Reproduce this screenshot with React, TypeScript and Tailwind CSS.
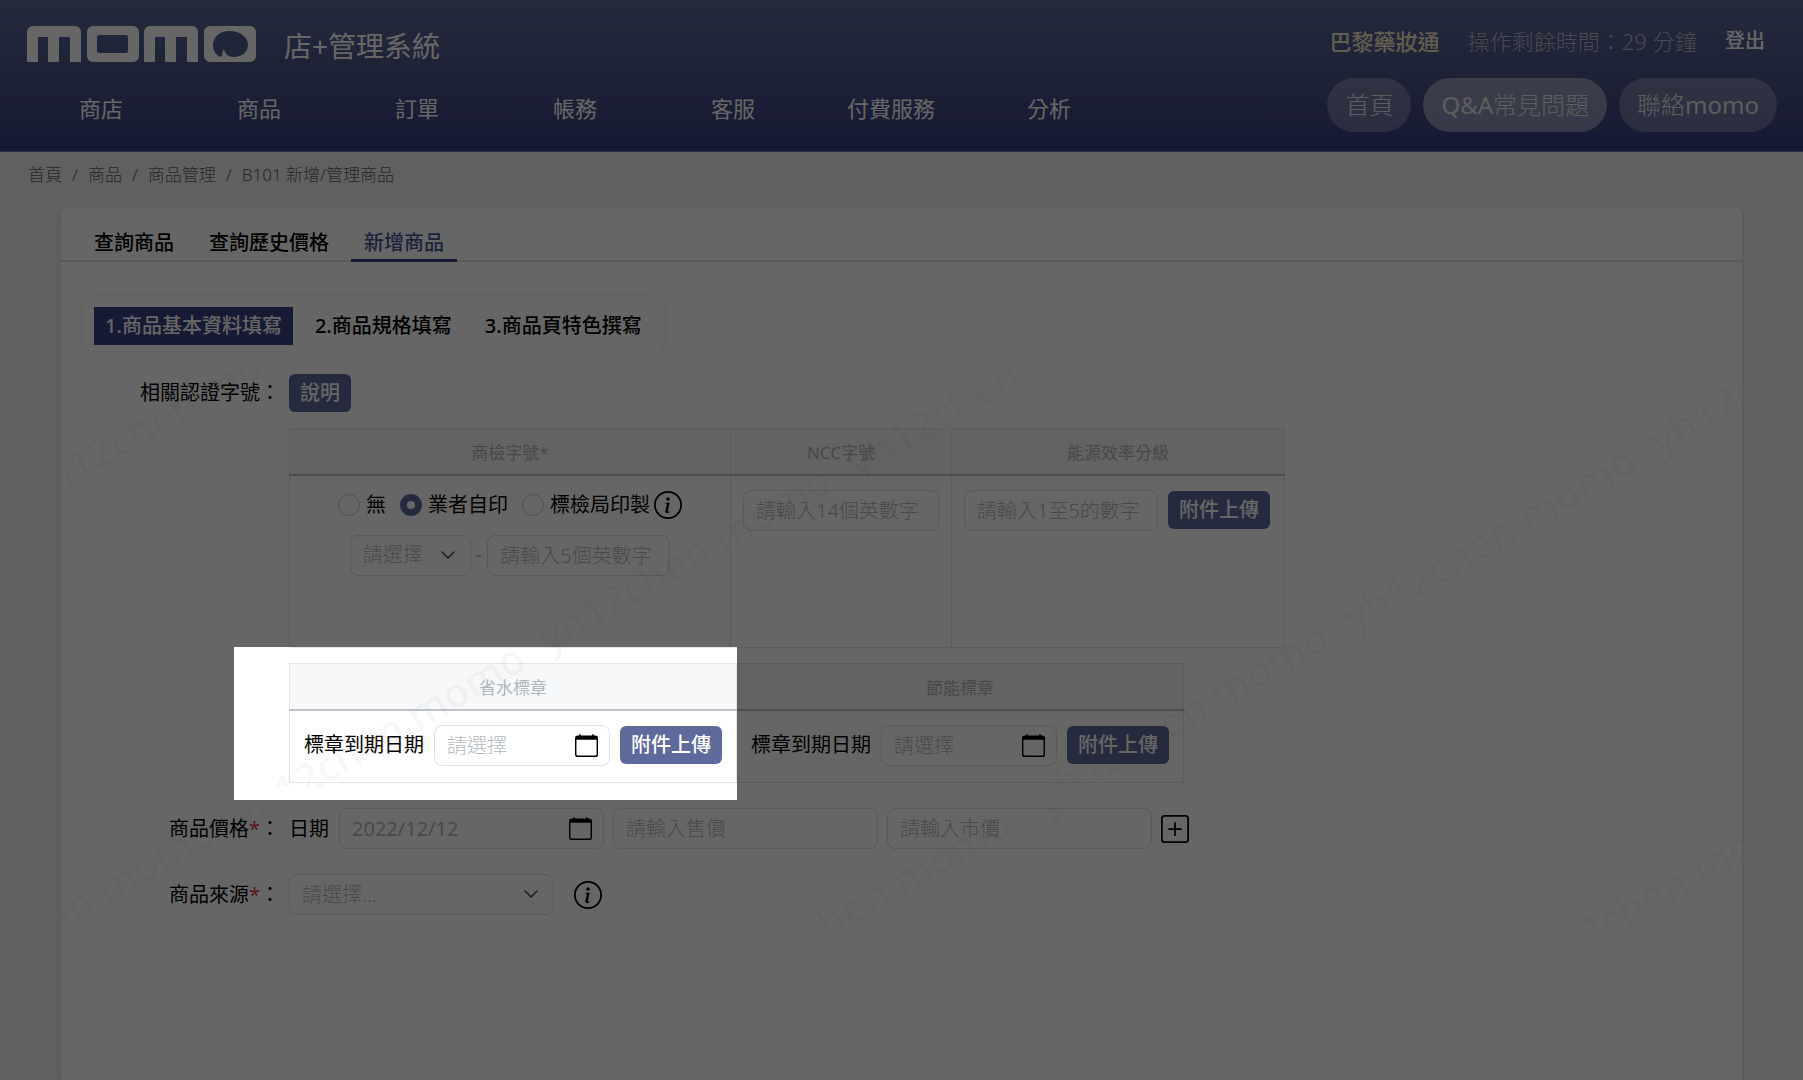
import { useState } from "react";

import {
  BsCalendar,
  BsChevronDown,
  BsInfoCircle,
  BsPlusSquare,
} from "react-icons/bs";

const navItems = ["商店", "商品", "訂單", "帳務", "客服", "付費服務", "分析"];
const breadcrumbs = ["首頁", "商品", "商品管理", "B101 新增/管理商品"];
const tabs = ["查詢商品", "查詢歷史價格", "新增商品"];
const steps = ["1.商品基本資料填寫", "2.商品規格填寫", "3.商品頁特色撰寫"];
const certOptions = ["無", "業者自印", "標檢局印製"];

const fieldClass =
  "h-[41px] rounded-lg border border-[#dcdfe2] bg-white px-3 text-xl text-[#b4babf] placeholder:text-[#b4babf] focus:outline-none";

function Logo() {
  return (
    <svg viewBox="0 0 229 36" className="h-9 w-[229px]" fill="#fff" role="img" aria-label="momo">
      <path d="M0 36V6a6 6 0 0 1 6-6h42a6 6 0 0 1 6 6v30H43V11H32v25H21V11H11v25z" />
      <path
        fillRule="evenodd"
        d="M66 0h40a6 6 0 0 1 6 6v24a6 6 0 0 1-6 6H66a6 6 0 0 1-6-6V6a6 6 0 0 1 6-6zm6 9a2 2 0 0 0-2 2v14a2 2 0 0 0 2 2h27a2 2 0 0 0 2-2V11a2 2 0 0 0-2-2z"
      />
      <path d="M117 36V6a6 6 0 0 1 6-6h42a6 6 0 0 1 6 6v30h-11V11h-11v25h-11V11h-10v25z" />
      <path
        fillRule="evenodd"
        d="M183 0h40a6 6 0 0 1 6 6v24a6 6 0 0 1-6 6h-40a6 6 0 0 1-6-6V6a6 6 0 0 1 6-6zm19 5c-9 0-16 6-16 14 0 5 2 9 7 12l2-1c0-2 0-4 2-7 1 5 4 8 10 8 8 0 14-5 14-12 0-8-8-14-19-14z"
      />
    </svg>
  );
}

function Header() {
  return (
    <header className="flex h-[152px] justify-between border-b border-[#6a70a0] bg-linear-to-b from-[#5c6898] via-[#4c5588] to-[#363e80] pr-[26px] text-white">
      <div>
        <div className="flex items-start gap-7 pt-[26px] pl-[27px]">
          <Logo />
          <h1 className="text-[28px] leading-10">店+管理系統</h1>
        </div>
        <nav className="mt-[26px] ml-[22px] grid grid-cols-[repeat(7,158px)] text-center text-[22px] leading-8">
          {navItems.map((item) => (
            <a key={item} href="#">
              {item}
            </a>
          ))}
        </nav>
      </div>

      <div className="pt-[25px]">
        <div className="flex items-center justify-between pr-3 pl-0.5 text-[22px] leading-8">
          <span className="font-medium text-[#f5e8c4]">巴黎藥妝通</span>
          <span className="font-light text-[#b4b9c6]">操作剩餘時間：29 分鐘</span>
          <a href="#" className="text-xl font-medium">
            登出
          </a>
        </div>
        <div className="mt-[21px] flex gap-3 text-2xl font-light text-[#e8e8e8]">
          <button type="button" className="h-[54px] rounded-full bg-white/25 px-[18px]">
            首頁
          </button>
          <button type="button" className="h-[54px] rounded-full bg-white/40 px-[18px]">
            <span className="font-normal">Q&amp;A</span>常見問題
          </button>
          <button type="button" className="h-[54px] rounded-full bg-white/25 px-[18px]">
            聯絡<span className="font-normal">momo</span>
          </button>
        </div>
      </div>
    </header>
  );
}

function Watermark() {
  const text = "yh12chen momo";
  return (
    <div
      aria-hidden="true"
      className="pointer-events-none absolute inset-x-0 top-[158px] font-['Open_Sans',sans-serif] text-[41px] font-semibold"
    >
      <svg className="block h-[421px] w-full fill-black/4">
        <text transform="translate(-25 142) rotate(-30)">{text}</text>
        <text transform="translate(182 467) rotate(-30)">{text}</text>
        <text transform="translate(488 289) rotate(-30)">{text}</text>
        <text transform="translate(797 115) rotate(-30)">{text}</text>
        <text transform="translate(985 446) rotate(-30)">{text}</text>
        <text transform="translate(1293 269) rotate(-30)">{text}</text>
        <text transform="translate(1599 92) rotate(-30)">{text}</text>
      </svg>
      <svg className="mt-5 block h-[121px] w-full fill-black/4">
        <text transform="translate(-128 200) rotate(-30)">{text}</text>
        <text transform="translate(180 22) rotate(-30)">{text}</text>
        <text transform="translate(667 192) rotate(-30)">{text}</text>
        <text transform="translate(985 14) rotate(-30)">{text}</text>
        <text transform="translate(1466 180) rotate(-30)">{text}</text>
      </svg>
    </div>
  );
}

function UploadButton() {
  return (
    <button
      type="button"
      className="h-[38px] shrink-0 rounded-md bg-[#5f6a9c] px-[11px] text-xl font-medium text-white"
    >
      附件上傳
    </button>
  );
}

function DateField({
  label,
  width,
  value,
}: {
  label: string;
  width: string;
  value?: string;
}) {
  return (
    <label className="flex items-center gap-[10px] whitespace-nowrap">
      {label}
      <span className={`relative ${width}`}>
        <input
          type="text"
          placeholder="請選擇"
          defaultValue={value}
          className={`${fieldClass} block w-full placeholder:font-light`}
        />
        <BsCalendar className="absolute top-[9px] right-3 size-[23px] text-black" />
      </span>
    </label>
  );
}

function SelectField({
  label,
  option,
  width,
}: {
  label: string;
  option: string;
  width: string;
}) {
  return (
    <span className={`relative ${width}`}>
      <select
        aria-label={label}
        className={`${fieldClass} block w-full appearance-none font-light`}
      >
        <option>{option}</option>
      </select>
      <BsChevronDown className="pointer-events-none absolute top-3 right-[15px] size-4 stroke-[0.5] text-[#343a40]" />
    </span>
  );
}

function FormRow({
  label,
  required,
  children,
}: {
  label: string;
  required?: boolean;
  children: React.ReactNode;
}) {
  return (
    <div className="flex items-center">
      <div className="w-[228px] shrink-0 pr-[9px] text-right">
        {label}
        {required && <span className="text-[#e0344a]">*</span>}：
      </div>
      {children}
    </div>
  );
}

const thClass =
  "h-[46px] border border-b-2 border-[#e3e7eb] border-b-[#bfc3c8] bg-[#f7f8fa] pt-[3px] text-[17px] font-normal text-[#b0b6bb]";
const tdClass = "border border-[#e3e7eb] align-top";

export default function App() {
  const [activeTab, setActiveTab] = useState("新增商品");
  const [step, setStep] = useState(steps[0]);
  const [cert, setCert] = useState("業者自印");

  return (
    <div
      lang="zh-Hant"
      className="flex min-h-screen flex-col overflow-hidden bg-[#f0f0f0] font-['Noto_Sans','Noto_Sans_CJK_TC',sans-serif] text-xl leading-7 text-black"
    >
      <Header />

      {/* パンくず */}
      <nav aria-label="breadcrumb" className="flex h-[54px] items-center px-7 pb-2 text-[17px] font-light text-[#5e6468]">
        {breadcrumbs.map((crumb, i) => (
          <span key={crumb}>
            {i > 0 && <span className="px-[10px]">/</span>}
            <a href="#">{crumb}</a>
          </span>
        ))}
      </nav>

      <main className="relative mx-[60px] grow rounded-t-lg border border-b-0 border-[#e8e8e8] bg-white shadow-md">
        {/* タブ */}
        <div className="flex gap-[9px] border-b-2 border-[#e2e2e2] px-[20px] pt-[22px]">
          {tabs.map((tab) => (
            <button
              key={tab}
              type="button"
              onClick={() => setActiveTab(tab)}
              className={`-mb-0.5 border-b-3 px-[13px] pb-0.5 font-medium ${
                activeTab === tab
                  ? "border-[#374182] text-[#4a5596]"
                  : "border-transparent"
              }`}
            >
              {tab}
            </button>
          ))}
        </div>

        {/* ステップ */}
        <div className="mt-[35px] ml-[23px] flex w-fit gap-[11px] rounded-xl p-[10px] shadow-[0_0_12px_rgba(0,0,0,0.08)]">
          {steps.map((s) => (
            <button
              key={s}
              type="button"
              onClick={() => setStep(s)}
              className={`h-[38px] px-[11px] font-medium ${
                step === s ? "bg-[#374182] text-white" : ""
              }`}
            >
              {s}
            </button>
          ))}
        </div>

        <div className="relative mt-[19px]">
          <FormRow label="相關認證字號">
            <button
              type="button"
              className="h-[38px] rounded-md bg-[#5f6a9c] px-[11px] font-medium text-white"
            >
              說明
            </button>
          </FormRow>

          <table className="mt-4 ml-[228px] w-[996px] table-fixed border-collapse">
            <thead>
              <tr>
                <th className={`${thClass} w-[441px]`}>商檢字號*</th>
                <th className={`${thClass} w-[221px]`}>NCC字號</th>
                <th className={thClass}>能源效率分級</th>
              </tr>
            </thead>
            <tbody>
              <tr className="h-[173px]">
                <td className={`${tdClass} pt-[15px]`}>
                  <div className="flex items-center justify-center gap-[14px]">
                    {certOptions.map((option) => (
                      <label key={option} className="flex items-center gap-1.5">
                        <input
                          type="radio"
                          name="cert"
                          checked={cert === option}
                          onChange={() => setCert(option)}
                          className="size-[22px] appearance-none rounded-full border border-[#c4c8cc] bg-white checked:border-[7px] checked:border-[#5f6a9c]"
                        />
                        {option}
                        {option === "標檢局印製" && (
                          <BsInfoCircle className="-ml-0.5 size-7" />
                        )}
                      </label>
                    ))}
                  </div>
                  <div className="mt-4 flex items-center justify-center gap-[5px] text-[#b4babf]">
                    <SelectField label="商檢字軌" option="請選擇" width="w-[121px]" />
                    -
                    <input
                      type="text"
                      aria-label="商檢號碼"
                      placeholder="請輸入5個英數字"
                      className={`${fieldClass} w-[183px] font-light`}
                    />
                  </div>
                </td>
                <td className={`${tdClass} px-3 pt-[14px]`}>
                  <input
                    type="text"
                    aria-label="NCC字號"
                    placeholder="請輸入14個英數字"
                    className={`${fieldClass} block w-full font-light`}
                  />
                </td>
                <td className={`${tdClass} px-3 pt-[14px]`}>
                  <div className="flex items-center gap-[10px]">
                    <input
                      type="text"
                      aria-label="能源效率分級"
                      placeholder="請輸入1至5的數字"
                      className={`${fieldClass} w-[194px] font-light`}
                    />
                    <UploadButton />
                  </div>
                </td>
              </tr>
            </tbody>
          </table>

          <div className="relative mt-[15px] ml-[228px] w-fit">
            <table className="w-[895px] table-fixed border-collapse">
              <thead>
                <tr>
                  <th className={thClass}>省水標章</th>
                  <th className={thClass}>節能標章</th>
                </tr>
              </thead>
              <tbody>
                <tr className="h-[73px]">
                  {["water", "energy"].map((kind) => (
                    <td key={kind} className={`${tdClass} px-[14px] pt-[14px]`}>
                      <div className="flex items-center gap-[10px]">
                        <DateField label="標章到期日期" width="w-[176px]" />
                        <UploadButton />
                      </div>
                    </td>
                  ))}
                </tr>
              </tbody>
            </table>
            {/* 省水標章だけを明るく見せるスポットライト */}
            <div className="pointer-events-none absolute -top-4 -left-[55px] z-10 h-[153px] w-[503px] shadow-[0_0_0_3000px_rgba(0,0,0,0.6)]" />
          </div>

          <div className="mt-[25px] flex flex-col gap-[25px]">
            <FormRow label="商品價格" required>
              <div className="flex items-center gap-[9px]">
                <DateField label="日期" width="w-[265px]" value="2022/12/12" />
                <input
                  type="text"
                  aria-label="售價"
                  placeholder="請輸入售價"
                  className={`${fieldClass} w-[265px] font-light`}
                />
                <input
                  type="text"
                  aria-label="市價"
                  placeholder="請輸入市價"
                  className={`${fieldClass} w-[265px] font-light`}
                />
                <button type="button" aria-label="新增價格">
                  <BsPlusSquare className="size-7" />
                </button>
              </div>
            </FormRow>
            <FormRow label="商品來源" required>
              <SelectField label="商品來源" option="請選擇..." width="w-[265px]" />
              <button type="button" aria-label="說明" className="ml-5">
                <BsInfoCircle className="size-7" />
              </button>
            </FormRow>
          </div>
        </div>

        <Watermark />
      </main>
    </div>
  );
}
